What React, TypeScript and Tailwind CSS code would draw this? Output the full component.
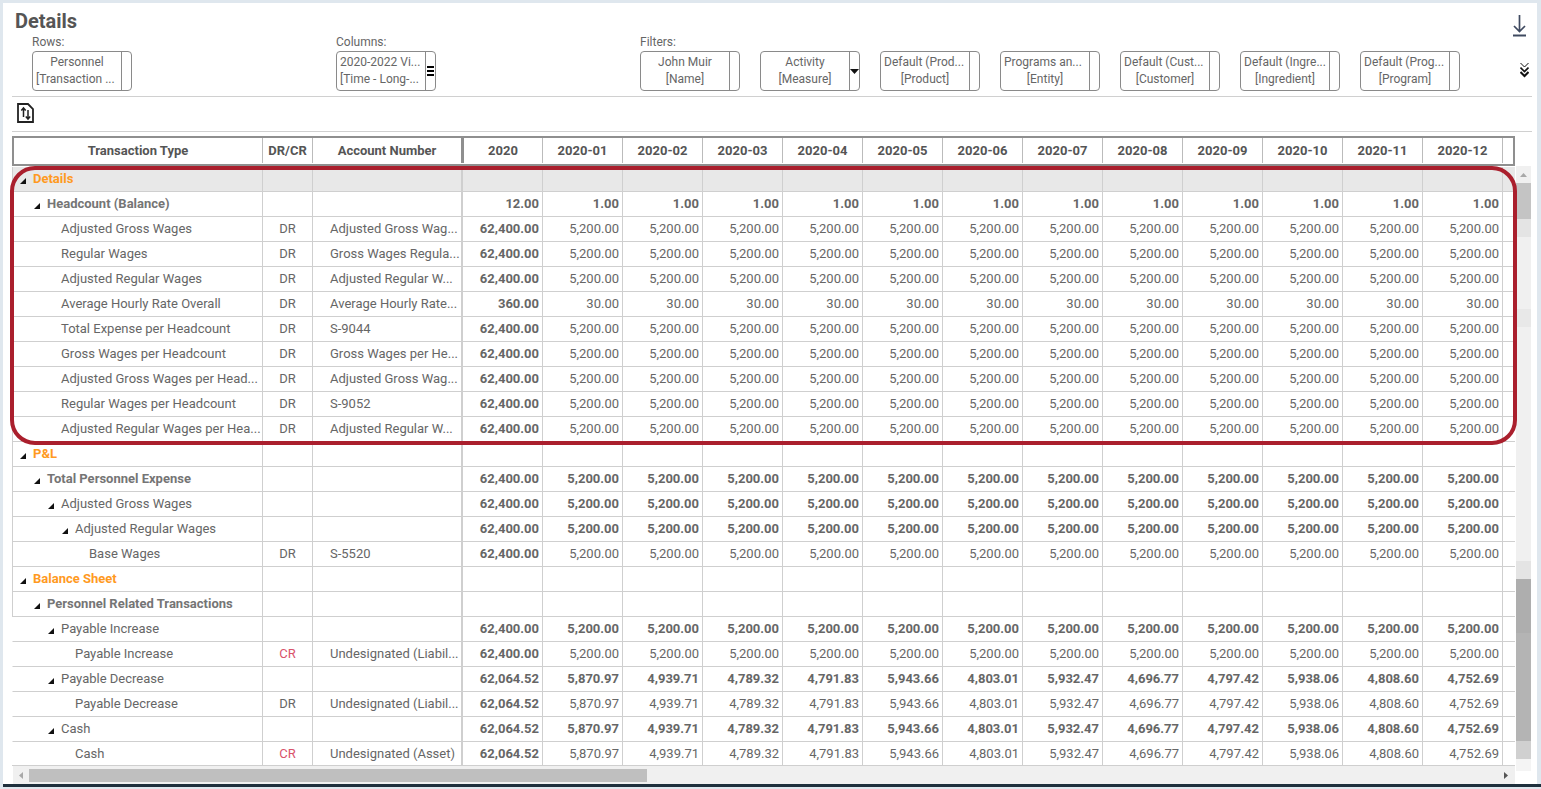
import React from "react";

const months = ["2020","2020-01","2020-02","2020-03","2020-04","2020-05","2020-06","2020-07","2020-08","2020-09","2020-10","2020-11","2020-12"];
const w52 = Array(12).fill("5,200.00");
const a = ["5,870.97","4,939.71","4,789.32","4,791.83","5,943.66","4,803.01","5,932.47","4,696.77","4,797.42","5,938.06","4,808.60","4,752.69"];
type R = { l: string; d: number; kind?: "sec" | "bold"; tri?: boolean; dc?: string; acc?: string; tot?: string; v?: string[]; bv?: boolean; bg?: boolean };
const rows: R[] = [
  { l: "Details", d: 0, kind: "sec", tri: true, bg: true },
  { l: "Headcount (Balance)", d: 1, kind: "bold", tri: true, tot: "12.00", v: Array(12).fill("1.00"), bv: true },
  { l: "Adjusted Gross Wages", d: 2, dc: "DR", acc: "Adjusted Gross Wag...", tot: "62,400.00", v: w52 },
  { l: "Regular Wages", d: 2, dc: "DR", acc: "Gross Wages Regula...", tot: "62,400.00", v: w52 },
  { l: "Adjusted Regular Wages", d: 2, dc: "DR", acc: "Adjusted Regular W...", tot: "62,400.00", v: w52 },
  { l: "Average Hourly Rate Overall", d: 2, dc: "DR", acc: "Average Hourly Rate...", tot: "360.00", v: Array(12).fill("30.00") },
  { l: "Total Expense per Headcount", d: 2, dc: "DR", acc: "S-9044", tot: "62,400.00", v: w52 },
  { l: "Gross Wages per Headcount", d: 2, dc: "DR", acc: "Gross Wages per He...", tot: "62,400.00", v: w52 },
  { l: "Adjusted Gross Wages per Head...", d: 2, dc: "DR", acc: "Adjusted Gross Wag...", tot: "62,400.00", v: w52 },
  { l: "Regular Wages per Headcount", d: 2, dc: "DR", acc: "S-9052", tot: "62,400.00", v: w52 },
  { l: "Adjusted Regular Wages per Hea...", d: 2, dc: "DR", acc: "Adjusted Regular W...", tot: "62,400.00", v: w52 },
  { l: "P&L", d: 0, kind: "sec", tri: true },
  { l: "Total Personnel Expense", d: 1, kind: "bold", tri: true, tot: "62,400.00", v: w52, bv: true },
  { l: "Adjusted Gross Wages", d: 2, tri: true, tot: "62,400.00", v: w52, bv: true },
  { l: "Adjusted Regular Wages", d: 3, tri: true, tot: "62,400.00", v: w52, bv: true },
  { l: "Base Wages", d: 4, dc: "DR", acc: "S-5520", tot: "62,400.00", v: w52 },
  { l: "Balance Sheet", d: 0, kind: "sec", tri: true },
  { l: "Personnel Related Transactions", d: 1, kind: "bold", tri: true },
  { l: "Payable Increase", d: 2, tri: true, tot: "62,400.00", v: w52, bv: true },
  { l: "Payable Increase", d: 3, dc: "CR", acc: "Undesignated (Liabil...", tot: "62,400.00", v: w52 },
  { l: "Payable Decrease", d: 2, tri: true, tot: "62,064.52", v: a, bv: true },
  { l: "Payable Decrease", d: 3, dc: "DR", acc: "Undesignated (Liabil...", tot: "62,064.52", v: a },
  { l: "Cash", d: 2, tri: true, tot: "62,064.52", v: a, bv: true },
  { l: "Cash", d: 3, dc: "CR", acc: "Undesignated (Asset)", tot: "62,064.52", v: a },
];
const pad: Record<number, string> = { 0: "pl-[7px]", 1: "pl-[21px]", 2: "pl-[35px]", 3: "pl-[49px]", 4: "pl-[63px]" };
const padLeaf: Record<number, string> = { 0: "pl-[20px]", 1: "pl-[34px]", 2: "pl-[48px]", 3: "pl-[62px]", 4: "pl-[76px]" };

function Tri() {
  return <svg width="6" height="6" viewBox="0 0 6 6" className="mr-[7px] mt-[4px] shrink-0"><polygon points="6,0 6,6 0,6" fill="#111" /></svg>;
}
function Line({ t }: { t: string }) {
  return <div className={t.endsWith("...") ? "text-left pl-[3px]" : "text-center"}>{t}</div>;
}
function Pill({ a, b, icon }: { a: string; b: string; icon?: React.ReactNode }) {
  return (
    <div className="w-[100px] h-[40px] border border-[#8a8a8a] rounded-[4px] flex text-[12px] leading-[17px] text-[#666] bg-white shrink-0">
      <div className="w-[88px] pt-[2px] whitespace-nowrap overflow-hidden">
        <Line t={a} /><Line t={b} />
      </div>
      <div className="flex-1 border-l border-[#8a8a8a] flex items-center justify-center">{icon}</div>
    </div>
  );
}
const Label = ({ children }: { children: React.ReactNode }) => <div className="text-[12px] leading-[14px] text-[#666] h-[16px]">{children}</div>;

export default function App() {
  return (
    <div className="w-[1541px] h-[789px] bg-[#dfe7ee] overflow-hidden pt-[3px] pl-[3px] font-['Roboto',sans-serif]">
      <div className="relative w-[1534px] h-[781px] bg-white pl-[9px]">
        <div className="flex justify-between h-[32px] pt-[5px]">
          <div className="pl-[3px] text-[20px] leading-[26px] font-bold text-[#555]">Details</div>
          <svg width="13" height="22" viewBox="0 0 13 22" className="mr-[11px] mt-[7px]" fill="none" stroke="#3f4a60" strokeWidth="1.7">
            <path d="M6.5 0V16.5M1 11L6.5 16.5L12 11" /><path d="M0 20.5H13" strokeWidth="2" />
          </svg>
        </div>
        <div className="flex h-[62px] w-[1520px] border-b border-[#d0d0d0] pl-[20px]">
          <div className="w-[304px]"><Label>Rows:</Label><Pill a="Personnel" b="[Transaction ..." /></div>
          <div className="w-[304px]"><Label>Columns:</Label>
            <Pill a="2020-2022 Vi..." b="[Time - Long-..." icon={<div className="w-[7px] h-[10px] border-y-2 border-black relative after:content-[''] after:absolute after:left-0 after:right-0 after:top-[2px] after:h-[2px] after:bg-black" />} />
          </div>
          <div>
            <Label>Filters:</Label>
            <div className="flex gap-[20px]">
              <Pill a="John Muir" b="[Name]" />
              <Pill a="Activity" b="[Measure]" icon={<svg width="9" height="5" viewBox="0 0 9 5"><polygon points="0,0 9,0 4.5,5" fill="#111" /></svg>} />
              <Pill a="Default (Prod..." b="[Product]" />
              <Pill a="Programs an..." b="[Entity]" />
              <Pill a="Default (Cust..." b="[Customer]" />
              <Pill a="Default (Ingre..." b="[Ingredient]" />
              <Pill a="Default (Prog..." b="[Program]" />
            </div>
          </div>
          <div className="ml-auto mr-[3px] mt-[27px]">
            <svg width="9" height="16" viewBox="0 0 9 16" fill="none" stroke="#111" strokeWidth="1.6">
              <path d="M0.5 1L4.5 5L8.5 1" strokeWidth="1" /><path d="M0.5 5.5L4.5 9.5L8.5 5.5" /><path d="M0.5 10L4.5 14L8.5 10" strokeWidth="2" />
            </svg>
          </div>
        </div>
        <div className="h-[35px] w-[1520px] border-b border-[#d0d0d0] pt-[6px] pl-[5px]">
          <svg width="17" height="20" viewBox="0 0 17 20" fill="none" stroke="#222" strokeWidth="1.5">
            <path d="M1 1H11L16 6V19H1Z" strokeWidth="1.8" />
            <path d="M6.5 14V5M4.3 7.5L6.5 5L8.7 7.5" /><path d="M11 7V16M8.8 13.5L11 16L13.2 13.5" />
          </svg>
        </div>
        <div className="h-[4px]" />
        <div className="flex items-start">
          <div className="w-[1503px]">
            {/* header */}
            <div className="flex h-[30px] border-2 border-[#8f8f8f] text-[13px] font-bold text-[#555] pb-[1px] overflow-hidden">
              <div className="w-[249px] shrink-0 border-r border-[#bbb] flex items-center justify-center">Transaction Type</div>
              <div className="w-[50px] shrink-0 border-r border-[#bbb] flex items-center justify-center">DR/CR</div>
              <div className="w-[151px] shrink-0 border-r-[3px] border-[#8f8f8f] flex items-center justify-center">Account Number</div>
              {months.map((m, i) => (
                <div key={m} className={`${i === 0 ? "w-[79px]" : "w-[80px]"} shrink-0 border-r border-[#bbb] flex items-center justify-center`}>{m}</div>
              ))}
            </div>
            {/* body */}
            <div className="h-[599px] mt-[1px] overflow-hidden border-b border-[#cfcfcf]">
              {rows.map((r, i) => {
                const sec = r.kind === "sec";
                const boldName = sec || r.kind === "bold";
                return (
                  <div key={i} className={`flex h-[25px] border-b border-l border-b-[#cfcfcf] text-[13px] leading-[24px] text-[#666] ${i < 18 ? "border-l-[#cfcfcf]" : "border-l-transparent"} ${r.bg ? "bg-[#e8e8e8]" : ""}`}>
                    <div className={`w-[250px] shrink-0 border-r border-[#cfcfcf] flex items-center whitespace-nowrap overflow-hidden ${r.tri ? pad[r.d] : padLeaf[r.d]} ${boldName ? "font-bold" : ""} ${sec ? "text-[#ff9a1f]" : r.kind === "bold" ? "text-[#757575]" : ""}`}>
                      {r.tri && <Tri />}{r.l}
                    </div>
                    <div className={`w-[50px] shrink-0 border-r border-[#cfcfcf] text-center ${r.dc === "CR" ? "text-[#d9536b]" : ""}`}>{r.dc}</div>
                    <div className="w-[150px] shrink-0 border-r-[2px] border-[#cfcfcf] pl-[17px] whitespace-nowrap overflow-hidden">{r.acc}</div>
                    <div className="w-[80px] shrink-0 border-r border-[#cfcfcf] text-right pr-[3px] font-bold">{r.tot}</div>
                    {(r.v ?? Array(12).fill("")).map((x, j) => (
                      <div key={j} className={`w-[80px] shrink-0 border-r border-[#cfcfcf] text-right pr-[3px] ${r.bv ? "font-bold" : ""}`}>{x}</div>
                    ))}
                  </div>
                );
              })}
            </div>
            {/* horizontal scrollbar */}
            <div className="flex h-[18px] bg-[#f0f0f0] ml-[1px] pt-[3px]">
              <div className="w-[16px] h-[13px] flex items-center justify-center"><svg width="4" height="7" viewBox="0 0 4 7"><polygon points="4,0 4,7 0,3.5" fill="#a8a8a8" /></svg></div>
              <div className="w-[618px] h-[13px] bg-[#bfbfbf]" />
              <div className="flex-1 h-[13px] flex items-center justify-end pr-[7px]"><svg width="4" height="7" viewBox="0 0 4 7"><polygon points="0,0 4,3.5 0,7" fill="#555" /></svg></div>
            </div>
          </div>
          {/* vertical scrollbar */}
          <div className="ml-[1px] mt-[30px] w-[15px] flex flex-col bg-[#f0f0f0]">
            <div className="h-[17px] flex items-center justify-center"><svg width="7" height="4" viewBox="0 0 7 4"><polygon points="0,4 7,4 3.5,0" fill="#a8a8a8" /></svg></div>
            <div className="h-[36px] bg-[#c4c4c4]" />
            <div className="h-[18px] bg-[#e4e4e4]" />
            <div className="h-[72px]" />
            <div className="h-[18px] bg-[#e8e8e8]" />
            <div className="h-[234px]" />
            <div className="h-[18px] bg-[#e4e4e4]" />
            <div className="h-[54px] bg-[#aeaeae]" />
            <div className="h-[108px] bg-[#b4b4b4]" />
            <div className="h-[18px] bg-[#d0d0d0]" />
            <div className="h-[12px] bg-[#f4f4f4]" />
          </div>
        </div>
        {/* highlight */}
        <div className="absolute left-[7px] top-[163px] w-[1507px] h-[279px] border-4 border-[#aa1f2d] rounded-[25px] pointer-events-none" />
        <div className="absolute left-0 top-full w-[1538px] h-[3px] bg-[#1e2f3c]" />
      </div>
    </div>
  );
}
